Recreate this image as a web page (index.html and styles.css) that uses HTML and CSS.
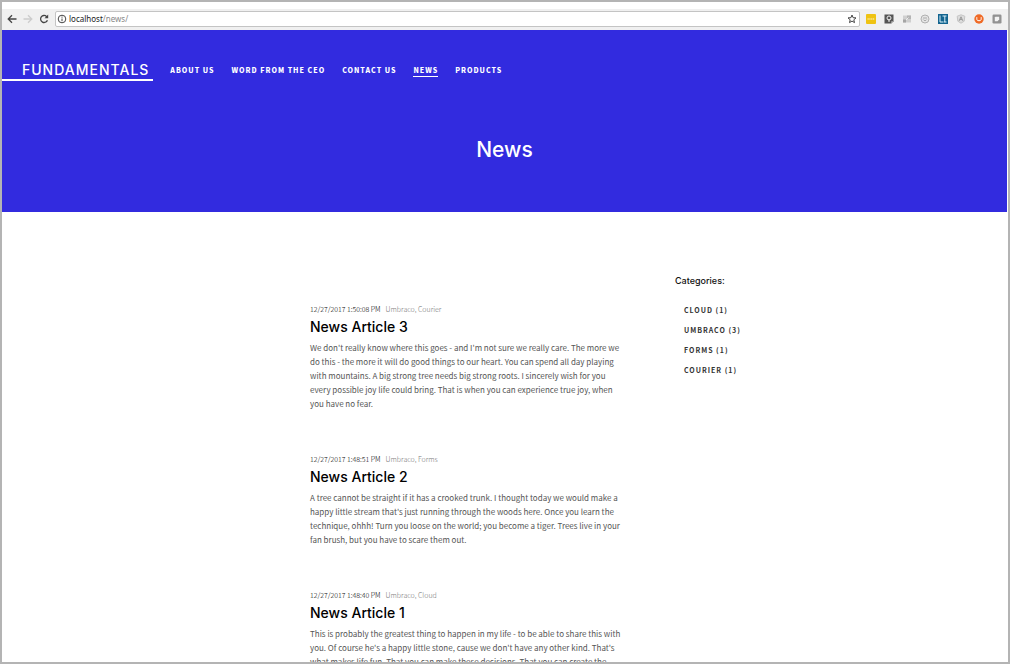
FILE: index.html
```html
<!DOCTYPE html>
<html lang="en">
<head>
<meta charset="utf-8">
<meta name="viewport" content="width=device-width, initial-scale=1">
<title>News</title>
<link rel="stylesheet" href="styles.css">
</head>
<body>
<div class="window">
  <div class="toolbar">
    <button class="tool" aria-label="Back"><svg viewBox="0 0 10 10"><path d="M9.5 5H1.5M5 1.2 1.2 5 5 8.8"/></svg></button>
    <button class="tool tool-off" aria-label="Forward" disabled><svg viewBox="0 0 10 10"><path d="M.5 5h8M5 1.2 8.8 5 5 8.8"/></svg></button>
    <button class="tool" aria-label="Reload"><svg viewBox="0 0 10 10"><path d="M8.4 6.2A3.5 3.5 0 1 1 7.5 2.4L8.4 3.3"/><path class="solid" d="M9.2.6v3.7H5.5z"/></svg></button>
    <div class="address">
      <svg class="info" viewBox="0 0 10 10" aria-hidden="true"><circle cx="5" cy="5" r="3.8"/><path d="M5 4.5v2.7M5 2.6v1.1"/></svg>
      <span class="url"><span class="host">localhost</span>/news/</span>
      <button class="star" aria-label="Bookmark"><svg viewBox="0 0 10 10"><path d="m5 1 1.1 2.7 2.9.2-2.2 1.9.7 2.8L5 7.1 2.5 8.6l.7-2.8L1 3.9l2.9-.2z"/></svg></button>
    </div>
    <div class="extensions">
      <button aria-label="Notes"><svg viewBox="0 0 10 10"><rect width="10" height="10" rx="1" fill="#efc312"/><path d="M1.5 5h7" stroke="#fff8cf" stroke-dasharray="1.3 .5"/></svg></button>
      <button aria-label="Page hints"><svg viewBox="0 0 10 10"><path d="M.5.5h9v6.8L7.3 9.5H.5z" fill="#555"/><circle cx="5" cy="4" r="2" fill="none" stroke="#eee"/><path d="M5 5v3" stroke="#eee"/><path d="M7.3 9.5V7.3h2.2z" fill="#bbb"/></svg></button>
      <button aria-label="Layout tool"><svg viewBox="0 0 10 10"><rect x="1" y="1.5" width="8" height="7" fill="#cfcfcf"/><path d="M5 1.5h4v3.5H5z" fill="#b4b4b4"/><path d="m3.5 6.5 3-3" fill="none" stroke="#eee"/><path d="M1 5.5h3v3H1z" fill="#a5a5a5"/></svg></button>
      <button aria-label="Status"><svg viewBox="0 0 10 10"><circle cx="5" cy="5" r="4" fill="#e6e6e6" stroke="#b0b0b0"/><path d="M3 4h4M3.2 5.5C4 7 6 7 6.8 5.5" fill="none" stroke="#aaa"/></svg></button>
      <button aria-label="Link tool"><svg viewBox="0 0 10 10"><path d="M0 0h10v10H0z" fill="#12648f"/><path d="M2 1.5V8h3M4.5 2h4M6.8 2v6M5.5 8h3" fill="none" stroke="#d8eef8"/></svg></button>
      <button aria-label="Inspector"><svg viewBox="0 0 10 10"><path d="m5 .8 3.8 1.4-.6 5L5 9.2 1.8 7.2l-.6-5z" fill="#dcdcdc" stroke="#c4c4c4"/><path d="m3.2 6.8 1.8-4 1.8 4M4 5.4h2" fill="none" stroke="#999"/></svg></button>
      <button aria-label="Umbraco"><svg viewBox="0 0 10 10"><circle cx="5" cy="5" r="4.7" fill="#ef6a26"/><path d="M2.8 3.2v1.6c0 1.4.6 1.9 2.2 1.9s2.2-.5 2.2-1.9V3.2" fill="none" stroke="#fff"/></svg></button>
      <button aria-label="Switcher"><svg viewBox="0 0 10 10"><rect x=".5" y=".5" width="9" height="9" rx="1.2" fill="#929292"/><path d="M3.5 2.8h3.7v2.7L5.5 7.2H2.8V3.5z" fill="#f3f3f3"/></svg></button>
    </div>
  </div>
  <header class="hero">
    <nav class="nav">
      <a class="brand" href="#">FUNDAMENTALS</a>
      <a class="link" href="#">ABOUT US</a>
      <a class="link" href="#">WORD FROM THE CEO</a>
      <a class="link" href="#">CONTACT US</a>
      <a class="link link-current" href="#" aria-current="page">NEWS</a>
      <a class="link" href="#">PRODUCTS</a>
    </nav>
    <h1 class="title">News</h1>
  </header>
  <div class="content">
    <main class="articles">
      <article class="article">
        <div class="meta"><time>12/27/2017 1:50:08 PM</time><span class="tags">Umbraco, Courier</span></div>
        <h2 class="headline">News Article 3</h2>
        <p class="text">We don't really know where this goes - and I'm not sure we really care. The more we<br>do this - the more it will do good things to our heart. You can spend all day playing<br>with mountains. A big strong tree needs big strong roots. I sincerely wish for you<br>every possible joy life could bring. That is when you can experience true joy, when<br>you have no fear.</p>
      </article>
      <article class="article">
        <div class="meta"><time>12/27/2017 1:48:51 PM</time><span class="tags">Umbraco, Forms</span></div>
        <h2 class="headline">News Article 2</h2>
        <p class="text">A tree cannot be straight if it has a crooked trunk. I thought today we would make a<br>happy little stream that's just running through the woods here. Once you learn the<br>technique, ohhh! Turn you loose on the world; you become a tiger. Trees live in your<br>fan brush, but you have to scare them out.</p>
      </article>
      <article class="article">
        <div class="meta"><time>12/27/2017 1:48:40 PM</time><span class="tags">Umbraco, Cloud</span></div>
        <h2 class="headline">News Article 1</h2>
        <p class="text">This is probably the greatest thing to happen in my life - to be able to share this with<br>you. Of course he's a happy little stone, cause we don't have any other kind. That's<br>what makes life fun. That you can make these decisions. That you can create the</p>
      </article>
    </main>
    <aside class="sidebar">
      <h2 class="sidebar-title">Categories:</h2>
      <ul class="categories">
        <li><a href="#">CLOUD (1)</a></li>
        <li><a href="#">UMBRACO (3)</a></li>
        <li><a href="#">FORMS (1)</a></li>
        <li><a href="#">COURIER (1)</a></li>
      </ul>
    </aside>
  </div>
</div>
</body>
</html>
```
FILE: styles.css
```css
* { box-sizing: border-box; }
body {
  margin: 0;
  font-family: "Noto Sans CJK SC", "Open Sans", sans-serif;
  background: #fff;
}
a { color: inherit; text-decoration: none; }
button { padding: 0; border: 0; background: none; }
svg { display: block; width: 10px; height: 10px; }
h1, h2, p, ul { margin: 0; padding: 0; }

.window {
  height: 100vh;
  overflow: hidden;
  border: 2px solid #b4b4b4;
  padding-top: 7px;
}

.toolbar {
  display: flex;
  align-items: center;
  height: 21px;
  padding: 0 6px 2px 5px;
  gap: 6px;
  background: #f0f0f0;
}
.tool svg, .info, .star svg {
  fill: none;
  stroke: #444;
  stroke-width: 1.3;
}
.tool-off svg { stroke: #ccc; }
.tool .solid { fill: #444; stroke: none; }
.address {
  flex: 1;
  display: flex;
  align-items: center;
  gap: 2px;
  height: 16px;
  padding: 0 2px 0 1px;
  border: 1px solid #c4c4c4;
  border-radius: 2px;
  background: #fff;
}
.info { stroke-width: 1; }
.star svg { stroke-width: 1; }
.url {
  flex: 1;
  font: 8px/14px "Noto Sans", sans-serif;
  color: #888;
}
.host { color: #222; }
.extensions { display: flex; gap: 8px; }

.hero {
  height: 182px;
  margin-right: 1px;
  background: #322bdf;
  color: #fff;
}
.nav {
  display: flex;
  align-items: center;
  gap: 17px;
  padding-top: 31px;
}
.brand {
  padding: 0 4px 0 20px;
  border-bottom: 2px solid #fff;
  font: 500 14px/18px Inter, sans-serif;
  letter-spacing: 1px;
}
.link {
  border-bottom: 1px solid transparent;
  font-size: 7px;
  font-weight: 900;
  line-height: 11px;
  letter-spacing: 1px;
}
.link-current { border-color: #fff; }
.title {
  padding-top: 56px;
  font: 500 21px/26px Inter, sans-serif;
  text-align: center;
}

.content {
  display: grid;
  grid-template-columns: 320px 1fr;
  gap: 45px;
  box-sizing: content-box;
  max-width: 434px;
  margin: 0 auto;
  padding-left: 44px;
}
.articles { padding-top: 91px; }
.article { margin-bottom: 42px; }
.meta {
  display: flex;
  gap: 5px;
  margin-bottom: 1px;
  font-size: 7px;
  font-weight: 300;
  line-height: 12px;
  color: #000;
}
.tags { color: #777; }
.headline {
  margin-bottom: 3px;
  font: 500 14px/22px Inter, sans-serif;
  color: #000;
}
.text {
  font-size: 8px;
  line-height: 14px;
  color: #555;
}
.sidebar { padding-top: 62px; }
.sidebar-title {
  margin-bottom: 12px;
  font: 500 9px/14px Inter, sans-serif;
  color: #111;
}
.categories {
  padding-left: 9px;
  list-style: none;
  font-size: 7px;
  font-weight: 700;
  line-height: 20px;
  letter-spacing: 1px;
  white-space: nowrap;
  color: #333;
}
```
